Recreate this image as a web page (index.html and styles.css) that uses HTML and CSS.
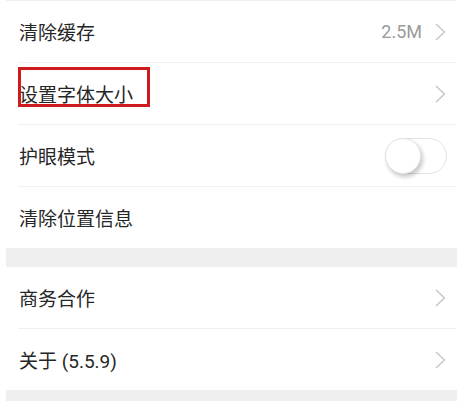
FILE: index.html
```html
<!DOCTYPE html>
<html lang="zh-CN">
<head>
  <meta charset="UTF-8" />
  <meta name="viewport" content="width=device-width, initial-scale=1.0" />
  <title>设置</title>
  <link rel="stylesheet" href="styles.css">
</head>
<body>
  <div class="settings">
    <div class="group first">
      <div class="row">
        <span class="label">清除缓存</span>
        <span class="value">2.5M</span>
        <svg class="arrow" width="11" height="18" viewBox="0 0 11 18"><polyline points="1,1 9.5,9 1,17" /></svg>
      </div>
      <div class="row">
        <span class="label">设置字体大小</span>
        <span class="mark"></span>
        <svg class="arrow" width="11" height="18" viewBox="0 0 11 18"><polyline points="1,1 9.5,9 1,17" /></svg>
      </div>
      <div class="row">
        <span class="label">护眼模式</span>
        <span class="switch"><span class="knob"></span></span>
      </div>
      <div class="row">
        <span class="label">清除位置信息</span>
      </div>
    </div>
    <div class="gap"></div>
    <div class="group">
      <div class="row">
        <span class="label">商务合作</span>
        <svg class="arrow" width="11" height="18" viewBox="0 0 11 18"><polyline points="1,1 9.5,9 1,17" /></svg>
      </div>
      <div class="row">
        <span class="label">关于 (5.5.9)</span>
        <svg class="arrow" width="11" height="18" viewBox="0 0 11 18"><polyline points="1,1 9.5,9 1,17" /></svg>
      </div>
    </div>
    <div class="gap"></div>
  </div>
</body>
</html>
```

FILE: styles.css
```css
body {
  margin: 0;
  background: #fff;
  font-family: Roboto, "Noto Sans CJK SC", sans-serif;
}
.settings {
  margin-left: 6px;
  overflow: hidden;
}
.group {
  background: #fff;
  padding-left: 12px;
}
.group.first {
  border-top: 1px solid #f0f0f0;
}
.row {
  position: relative;
  display: flex;
  align-items: center;
  height: 61px;
  padding-right: 10px;
  border-bottom: 1px solid #f0f0f0;
}
.row:last-child {
  border-bottom: none;
}
.label {
  flex: 1;
  font-size: 19px;
  color: #262626;
  padding-left: 1px;
}
.value {
  font-size: 18px;
  color: #9a9a9a;
  margin-right: 13px;
}
.arrow {
  margin-right: 1px;
}
.arrow polyline {
  fill: none;
  stroke: #c4c4c4;
  stroke-width: 1.3;
}
.mark {
  position: absolute;
  left: 0;
  top: 4px;
  width: 126px;
  height: 34px;
  border: 3px solid #cf1a1f;
}
.switch {
  position: relative;
  width: 60px;
  height: 34px;
  border: 1.5px solid #e2e2e2;
  border-radius: 19px;
  background: #fff;
}
.knob {
  position: absolute;
  left: -1px;
  top: -1px;
  width: 36px;
  height: 36px;
  border-radius: 50%;
  background: #fff;
  border: 1px solid #e4e4e4;
  box-sizing: border-box;
  box-shadow: 2px 3px 4px rgba(0, 0, 0, 0.22);
}
.gap {
  height: 19px;
  background: #efefef;
}
```
